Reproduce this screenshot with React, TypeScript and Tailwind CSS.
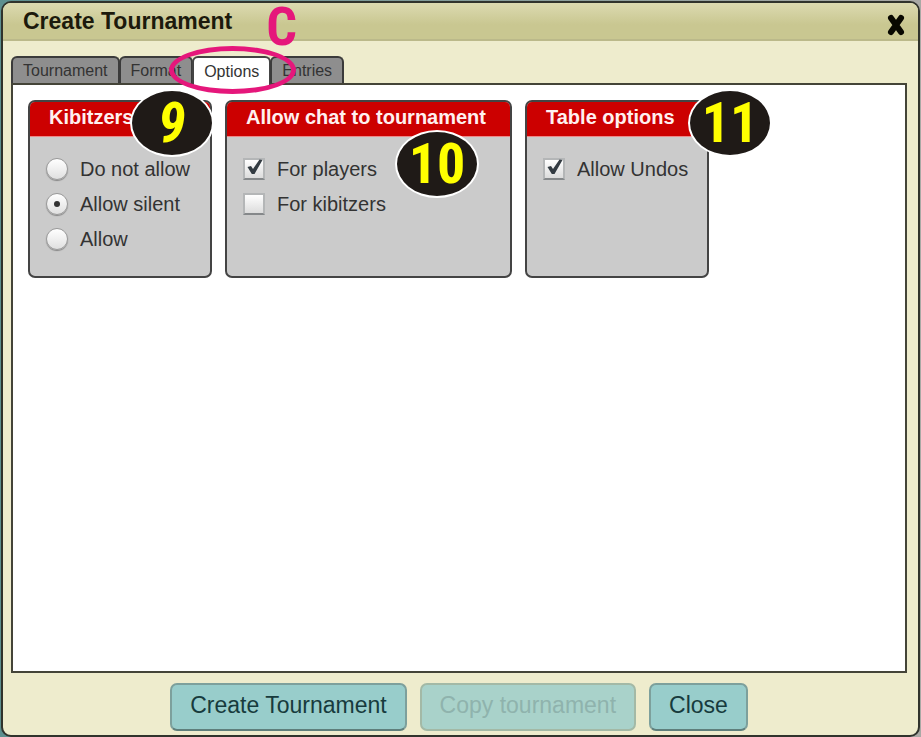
import React, { useState } from "react";

const tabs = ["Tournament", "Format", "Options", "Entries"];
const kibitzerOptions = ["Do not allow", "Allow silent", "Allow"];

type CardProps = {
  title: string;
  className: string;
  badge: React.ReactNode;
  children: React.ReactNode;
};

const Card = ({ title, className, badge, children }: CardProps) => (
  <section
    className={`relative h-[178px] rounded-[7px] border-2 border-[#444] bg-[#cbcbcb] ${className}`}
  >
    <h2 className="h-[35px] rounded-t-[5px] border-b border-[#e88] bg-[#cc0000] pl-[19px] text-[20px] leading-[31px] font-bold whitespace-nowrap text-[#fff0f0]">
      {title}
    </h2>
    <div className="flex flex-col pt-[14px] pl-4">{children}</div>
    {badge}
  </section>
);

const Badge = ({ label, className }: { label: string; className: string }) => (
  <span
    className={`absolute flex h-[68px] w-[84px] items-center justify-center rounded-[50%] border-2 border-white bg-[#1f1a17] font-['Roboto_Condensed','Liberation_Sans',sans-serif] text-[56px] leading-[64px] font-bold text-[#ffff00] ${className}`}
  >
    {label}
  </span>
);

const Check = ({ label, defaultChecked }: { label: string; defaultChecked?: boolean }) => (
  <label className="flex h-[35px] items-center gap-3 text-[20px] whitespace-nowrap">
    <span className="grid size-[22px]">
      <input
        type="checkbox"
        defaultChecked={defaultChecked}
        className="peer col-start-1 row-start-1 size-[22px] appearance-none border-2 border-[#b4b6b7] border-b-[#85888a] bg-linear-to-b from-white to-[#dcdcdc]"
      />
      <svg
        viewBox="0 0 22 22"
        className="pointer-events-none invisible col-start-1 row-start-1 size-[22px] peer-checked:visible"
      >
        <path d="M4.5 9 8 8 10 11 16.5 1.5 19.5 2 11.5 16 8.8 16Z" fill="#333b42" />
      </svg>
    </span>
    {label}
  </label>
);

const App = () => {
  const [activeTab, setActiveTab] = useState("Options");
  const [kibitzers, setKibitzers] = useState("Allow silent");

  return (
    <div className="flex min-h-screen flex-col bg-linear-to-r from-[#5d8f8f] to-[#a9a9a5] px-px pt-px font-['Liberation_Sans',Arial,sans-serif] text-[#333]">
      <div className="flex flex-1 flex-col rounded-[10px] border-2 border-[#30332c] bg-[#eeeccd]">
        <header className="flex h-[38px] items-center justify-between rounded-t-[8px] border-b-2 border-[#bbb98a] bg-linear-to-b from-[#dcdab0] to-[#c9c791] to-60% pr-[13px] pl-5">
          <h1 className="text-[23px] leading-9 font-bold text-[#1c1a0c]">Create Tournament</h1>
          <button type="button" aria-label="Close window" className="mt-2">
            <svg viewBox="0 0 18 22" className="h-[22px] w-[18px]">
              <path
                d="M4 4 14 18M14 4 4 18"
                stroke="#080800"
                strokeWidth="6"
                strokeLinecap="round"
              />
            </svg>
          </button>
        </header>

        <main className="flex flex-1 flex-col pt-[15px] pr-[11px] pl-2">
          <div role="tablist" className="flex">
            {tabs.map((tab) => (
              <div key={tab} className="relative -mr-px h-[27px]">
                <button
                  type="button"
                  role="tab"
                  aria-selected={tab === activeTab}
                  onClick={() => setActiveTab(tab)}
                  className={
                    tab === activeTab
                      ? "relative h-[29px] rounded-t-[6px] border-2 border-b-0 border-[#444] bg-white px-[10px] text-[16px] leading-6"
                      : "h-[27px] rounded-t-[6px] border-2 border-b-0 border-[#3b3b3b] bg-[#8e8e8e] px-[10px] text-[16px] leading-6"
                  }
                >
                  {tab}
                </button>
                {tab === "Options" && (
                  <>
                    <span className="pointer-events-none absolute -top-[10px] -left-[23px] z-10 h-[48px] w-[127px] rounded-[50%] border-[5px] border-[#e5177b]" />
                    <span className="pointer-events-none absolute -top-[55px] left-[74px] z-10 font-['Roboto_Condensed','Liberation_Sans',sans-serif] text-[54px] leading-[52px] font-bold text-[#e5177b]">
                      C
                    </span>
                  </>
                )}
              </div>
            ))}
          </div>

          <div
            role="tabpanel"
            className="flex flex-1 items-start gap-[13px] border-2 border-[#444438] bg-white pt-[15px] pl-[15px]"
          >
            <Card
              title="Kibitzers"
              className="w-[184px]"
              badge={<Badge label="9" className="-top-[13px] right-[-4px] italic" />}
            >
              {kibitzerOptions.map((option) => (
                <label key={option} className="flex h-[35px] items-center gap-3 text-[20px] whitespace-nowrap">
                  <span className="grid size-[22px] place-items-center">
                    <input
                      type="radio"
                      name="kibitzers"
                      checked={kibitzers === option}
                      onChange={() => setKibitzers(option)}
                      className="peer col-start-1 row-start-1 size-[22px] appearance-none rounded-full border border-[#999] bg-linear-to-b from-white to-[#e0e0e0] shadow-[0_1px_1px_#888]"
                    />
                    <span className="pointer-events-none invisible col-start-1 row-start-1 size-[6px] rounded-full bg-[#333] peer-checked:visible" />
                  </span>
                  {option}
                </label>
              ))}
            </Card>
            <Card
              title="Allow chat to tournament"
              className="w-[287px]"
              badge={<Badge label="10" className="top-7 right-[31px]" />}
            >
              <Check label="For players" defaultChecked />
              <Check label="For kibitzers" />
            </Card>
            <Card
              title="Table options"
              className="w-[184px]"
              badge={<Badge label="11" className="-top-[13px] right-[-65px]" />}
            >
              <Check label="Allow Undos" defaultChecked />
            </Card>
          </div>

          <footer className="flex justify-center gap-[13px] pt-[10px] pb-1 text-[23px] text-[#173b3d]">
            <button
              type="button"
              className="h-12 rounded-[7px] border-2 border-[#7da09c] border-b-[#5f7f7c] bg-[#98cdcb] px-[18px] pb-1"
            >
              Create Tournament
            </button>
            <button
              type="button"
              disabled
              className="h-12 rounded-[7px] border-2 border-[#a3b9a6] bg-[#a9d2ca] px-[18px] pb-1 text-[#8fb3ad]"
            >
              Copy tournament
            </button>
            <button
              type="button"
              className="h-12 rounded-[7px] border-2 border-[#7da09c] border-b-[#5f7f7c] bg-[#98cdcb] px-[18px] pb-1"
            >
              Close
            </button>
          </footer>
        </main>
      </div>
    </div>
  );
};

export default App;
